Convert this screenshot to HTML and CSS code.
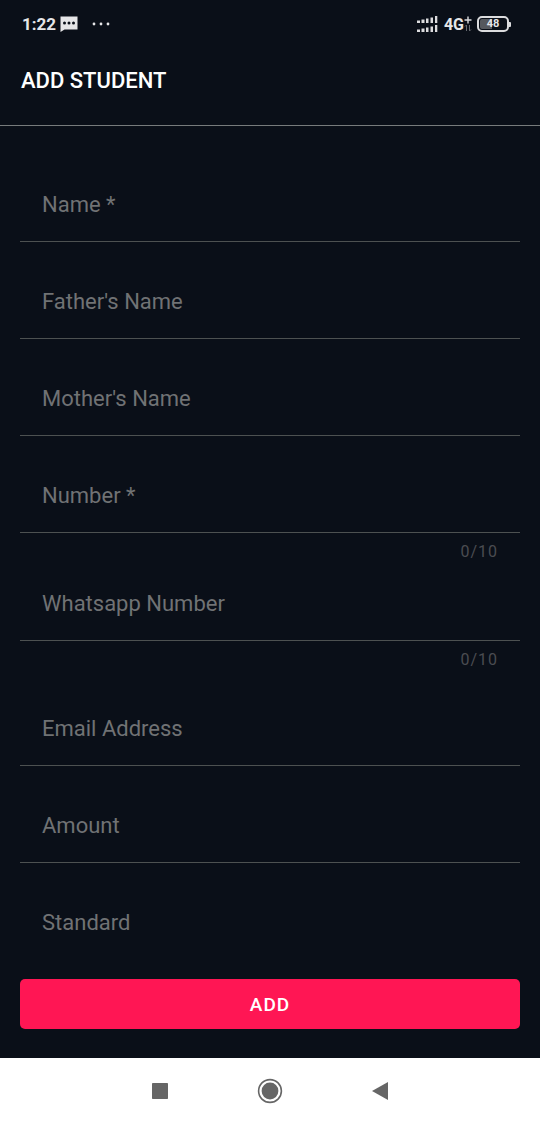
FILE: index.html
```html
<!DOCTYPE html>
<html lang="en">
<head>
<meta charset="utf-8">
<meta name="viewport" content="width=device-width, initial-scale=1">
<title>Add Student</title>
<link rel="stylesheet" href="styles.css">
</head>
<body>
<div class="status">
  <div class="status-group">
    <span class="clock">1:22</span>
    <svg class="message-icon" width="18" height="16" viewBox="0 0 18 16" aria-hidden="true"><path d="M0.5 0.5h17v13H4.5L0.500 16z" fill="#e6e6e8"/><g fill="#0a0f18"><circle cx="4.5" cy="7" r="1.5"/><circle cx="9" cy="7" r="1.5"/><circle cx="13.500" cy="7" r="1.5"/></g></svg>
    <svg class="more-icon" width="18" height="4" viewBox="0 0 18 4" fill="#e6e6e8" aria-hidden="true"><circle cx="2" cy="2" r="1.4"/><circle cx="9" cy="2" r="1.4"/><circle cx="16" cy="2" r="1.4"/></svg>
  </div>
  <div class="status-group">
    <svg width="21" height="16" viewBox="0 0 21 16" fill="#dcdcde" aria-hidden="true"><path d="M0 4.500h3V7H0zM4.500 3.500h3V7h-3zM9 2.500h2.500V7H9zM13.500 1.500H16V7h-2.500zM18 0h2.300v7H18zM0 13.500h3V16H0zM4.500 12.500h3V16h-3zM9 11.500h2.500V16H9zM13.500 10.500H16V16h-2.500zM18 9h2.300v7H18z"/></svg>
    <span class="network">4G</span>
    <svg class="plus-icon" width="8" height="16" viewBox="0 0 8 16" fill="none" aria-hidden="true"><path d="M0.500 4h7M4 0.500v7" stroke="#dcdcde" stroke-width="1.4"/><path d="M2.500 15V9L1 10.500M5.500 9v6L7 13.500" stroke="#66696f"/></svg>
    <span class="battery"><span>48</span></span>
    <span class="battery-tip"></span>
  </div>
</div>
<header class="header"><h1>ADD STUDENT</h1></header>
<form class="form">
  <div class="fields">
    <div class="field"><input id="name" type="text" required><label for="name">Name *</label></div>
    <div class="field"><input id="father" type="text"><label for="father">Father's Name</label></div>
    <div class="field"><input id="mother" type="text"><label for="mother">Mother's Name</label></div>
    <div class="field"><input id="number" type="tel" maxlength="10" required><label for="number">Number *</label></div>
    <p class="counter counter-tight">0/10</p>
    <div class="field"><input id="whatsapp" type="tel" maxlength="10"><label for="whatsapp">Whatsapp Number</label></div>
    <p class="counter">0/10</p>
    <div class="field"><input id="email" type="email"><label for="email">Email Address</label></div>
    <div class="field"><input id="amount" type="text"><label for="amount">Amount</label></div>
    <div class="field"><input id="standard" type="text"><label for="standard">Standard</label></div>
  </div>
  <div class="actions"><button class="add" type="button">ADD</button></div>
</form>
<nav class="system-nav">
  <button type="button" aria-label="Recent apps"><svg width="26" height="26" viewBox="0 0 26 26"><rect x="5" y="5" width="16" height="16" rx="0.7" fill="#666"/></svg></button>
  <button type="button" aria-label="Home"><svg width="26" height="26" viewBox="0 0 26 26"><circle cx="13" cy="13" r="11.4" fill="none" stroke="#666" stroke-width="1.6"/><circle cx="13" cy="13" r="8.4" fill="#666"/></svg></button>
  <button type="button" aria-label="Back"><svg width="26" height="26" viewBox="0 0 26 26"><path d="M5 13 21 4v18z" fill="#666"/></svg></button>
</nav>
</body>
</html>
```

FILE: styles.css
```css
* { box-sizing: border-box; }

body {
  margin: 0;
  height: 100vh;
  display: flex;
  flex-direction: column;
  background: #0a0f18;
  color: #fff;
  font-family: Roboto, sans-serif;
}

.status {
  display: flex;
  justify-content: space-between;
  align-items: center;
  height: 48px;
  padding: 0 30px 0 22px;
  color: #e6e6e8;
}

.status-group { display: flex; align-items: center; }
.clock { font-size: 17px; font-weight: 700; }
.message-icon { margin-left: 4px; }
.more-icon { margin-left: 14px; }
.network { margin-left: 6px; font-size: 16px; font-weight: 700; }
.plus-icon { margin-right: 5px; }

.battery {
  display: flex;
  justify-content: center;
  width: 32px;
  padding: 1px;
  border: 2px solid #dcdcde;
  border-radius: 5px;
  background: linear-gradient(90deg, #55585d 45%, transparent 45%);
  background-clip: content-box;
  font-size: 11px;
  line-height: 10px;
  font-weight: 700;
}

.battery-tip {
  width: 2px;
  height: 5px;
  margin-right: -1px;
  border-radius: 0 1px 1px 0;
  background: #dcdcde;
}

.header {
  display: flex;
  height: 78px;
  padding: 20px 21px;
  border-bottom: 1px solid #777b7c;
}

.header h1 {
  margin: 0;
  font-size: 22px;
  line-height: 26px;
  font-weight: 500;
}

.form {
  flex: 1;
  min-height: 0;
  display: flex;
  flex-direction: column;
}

.fields {
  flex: 1;
  min-height: 0;
  padding: 41px 20px 0;
  overflow-y: auto;
  scrollbar-width: none;
}

.field {
  position: relative;
  height: 75px;
  margin-bottom: 22px;
  border-bottom: 1px solid #4d5151;
}

.field:has(+ .counter) { margin-bottom: 9px; }

.field input {
  width: 100%;
  height: 100%;
  padding: 0 22px;
  border: 0;
  outline: 0;
  background: transparent;
  color: #fff;
  font: 22px Roboto, sans-serif;
}

.field label {
  position: absolute;
  top: 24px;
  left: 22px;
  color: #707274;
  font-size: 22px;
  line-height: 28px;
  pointer-events: none;
}

.field input:focus + label {
  top: 4px;
  font-size: 16px;
}

.counter {
  margin: 0 22px 21px;
  color: #4a4c51;
  font-size: 16px;
  line-height: 20px;
  letter-spacing: 1px;
  text-align: right;
}

.counter-tight { margin-bottom: 4px; }

.actions { padding: 22px 20px 29px; }

.add {
  display: block;
  width: 100%;
  height: 50px;
  border: 0;
  border-radius: 5px;
  background: #ff1654;
  color: #fff;
  font: 500 19px Roboto, sans-serif;
  letter-spacing: 1px;
}

.system-nav {
  display: flex;
  justify-content: center;
  align-items: center;
  gap: 84px;
  height: 65px;
  background: #fff;
}

.system-nav button {
  display: flex;
  padding: 0;
  border: 0;
  background: transparent;
}
```
